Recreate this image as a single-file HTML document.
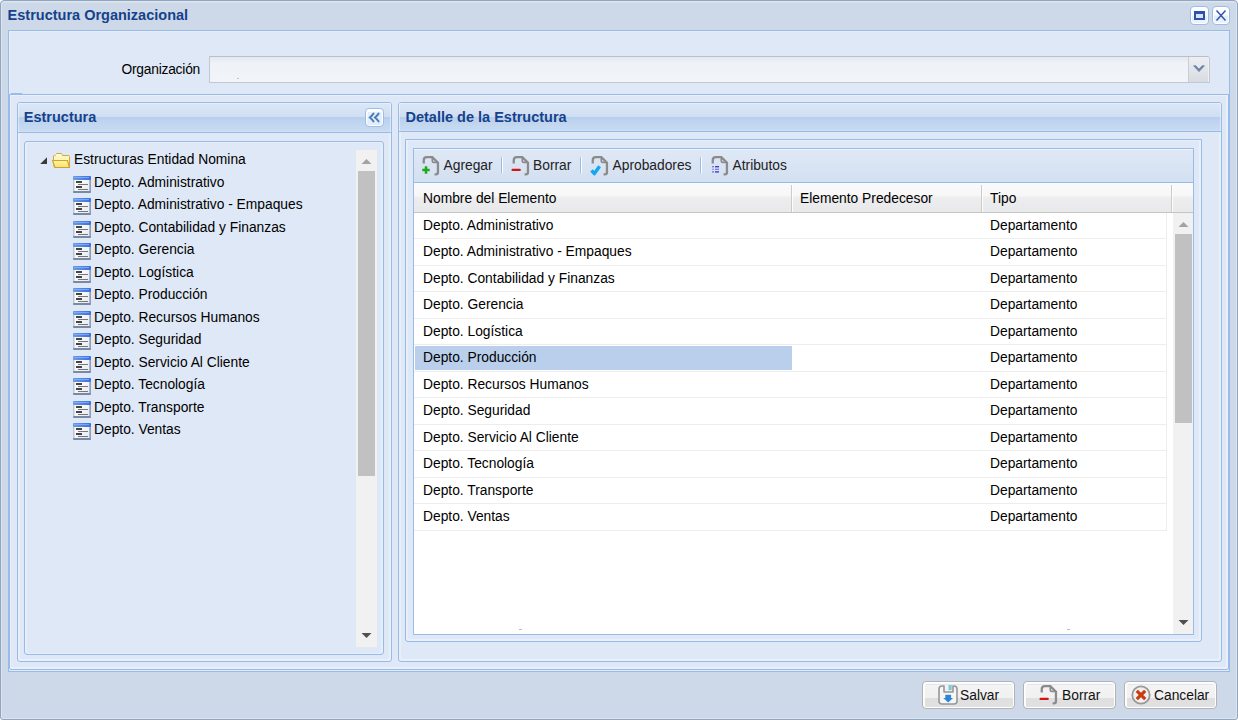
<!DOCTYPE html>
<html><head><meta charset="utf-8">
<style>
*{box-sizing:border-box}
html,body{margin:0;padding:0;width:1238px;height:720px;overflow:hidden;background:#fff;font-family:"Liberation Sans",sans-serif;}
.a{position:absolute}
.b{border:1px solid #99bbe8}
.t{position:absolute;white-space:nowrap;font-size:13.8px;color:#000;line-height:16px}
.ttl{position:absolute;white-space:nowrap;font-weight:bold;color:#15428b;font-size:14.5px;line-height:16px}
.tb{position:absolute;white-space:nowrap;font-size:13.8px;color:#222;line-height:16px}
.sep{position:absolute;width:2px;height:16px;border-left:1px solid #98bbe9;border-right:1px solid #fff}
</style></head><body>

<div class="a" style="left:0;top:0;width:1238px;height:720px;border:1px solid #8fa5c2;border-radius:4px 4px 3px 3px;box-shadow:inset 1px 1px 0 #dde5ef,inset -1px -1px 0 #dde5ef;background:#cdd9e8"></div>
<div class="a" style="left:2px;top:2px;width:1234px;height:1px;background:#d5dee9"></div>
<div class="ttl" style="left:7.6px;top:7px;">Estructura Organizacional</div>
<div class="a" style="left:1190px;top:6px;width:19px;height:19px;border:1px solid #9dbde8;border-radius:4px;background:linear-gradient(#fff 0,#fbfdff 45%,#e4eefb 55%,#eef4fc 100%);box-shadow:inset 0 0 0 1px #fff"></div>
<div class="a" style="left:1194px;top:11px;width:11px;height:9px;border:2px solid #3050ad;border-top-width:3px;background:#d4e4f9"></div>
<div class="a" style="left:1212px;top:6px;width:18px;height:19px;border:1px solid #9dbde8;border-radius:4px;background:linear-gradient(#fff 0,#fbfdff 45%,#e4eefb 55%,#eef4fc 100%);box-shadow:inset 0 0 0 1px #fff"></div>
<svg class="a" style="left:1215px;top:9px" width="12" height="13" viewBox="0 0 12 13"><path d="M1.5 1.5 L10.5 11.5 M10.5 1.5 L1.5 11.5" stroke="#3553b0" stroke-width="1.5" fill="none"/></svg>
<div class="a b" style="left:8px;top:30px;width:1222px;height:642px;background:#dfe8f6;box-shadow:inset 1px 1px 0 #e6eef9,inset 0 -1px 0 #e3ebf7"></div>
<div class="t" style="left:121.4px;top:62.2px;letter-spacing:-0.22px">Organización</div>
<div class="a" style="left:209px;top:56px;width:1001px;height:27px;border:1px solid #c2c7d1;border-top-color:#b8beca;border-radius:0 3px 0 0;background:linear-gradient(#e6eaf0 0,#e9edf3 3px,#eff3f8 6px,#f1f4f9 100%)"></div>
<div class="a" style="left:1188px;top:57px;width:21px;height:25px;border-left:1px solid #c9ced6;border-radius:0 2px 0 0;background:linear-gradient(#eceef2,#e4e7eb 40%,#d8dbe1);box-shadow:inset -1px 0 0 #eef0f3"></div>
<svg class="a" style="left:1193px;top:65px" width="12" height="8" viewBox="0 0 12 8"><path d="M0.6 0.8 L6 6.6 L11.4 0.8 L9.2 0.8 L6 4.2 L2.8 0.8 Z" fill="#6c82a9" stroke="#6c82a9" stroke-width="0.8" stroke-linejoin="round"/></svg>
<div class="a" style="left:237px;top:78px;width:2px;height:1px;background:#c0c4d0"></div>
<div class="a b" style="left:9px;top:94px;width:1220px;height:576px;background:#dfe8f6;border-radius:0 0 2px 2px;box-shadow:inset 1px 1px 0 #e9f0fa,inset -2px -2px 0 #e9f0fa"></div>
<div class="a" style="left:10px;top:93px;width:13px;height:2px;background:#99bbe8;border-radius:2px 2px 0 0"></div>
<div class="a b" style="left:17px;top:102px;width:375px;height:560px;border-radius:3px;background:#dfe8f6;box-shadow:inset 2px 1px 0 #e8eff9,inset -2px -2px 0 #e9f0fa"></div>
<div class="a" style="left:18px;top:103px;width:373px;height:30px;border-bottom:1px solid #99bbe8;border-radius:2px 2px 0 0;box-shadow:inset 1px 0 0 rgba(255,255,255,0.45),inset -1px 0 0 rgba(255,255,255,0.45);background:linear-gradient(to bottom,#e6eef9 0,#e6eef9 1px,#dce7f6 1px,#cfdef2 14px,#b6cdec 14px,#bed3ef 18px,#c9dbf2 28px,#d3e2f5 29px)"></div>
<div class="ttl" style="left:23.8px;top:109.4px;">Estructura</div>
<div class="a" style="left:365px;top:108px;width:19px;height:19px;border:1px solid #9dbde8;border-radius:4px;background:linear-gradient(#fff,#f3f8fe 40%,#dce9fa);box-shadow:inset 0 0 0 1px #fff"></div>
<svg class="a" style="left:360px;top:104px" width="30" height="26" viewBox="0 0 30 26"><rect x="8" y="8" width="13.5" height="12" fill="#e2eefc"/><path d="M13.5 9.6 Q11.6 12.2 9.9 13.5 Q11.6 14.8 13.5 17.4 M18.6 9.6 Q16.7 12.2 15 13.5 Q16.7 14.8 18.6 17.4" stroke="#4a7ab2" stroke-width="1.9" stroke-linecap="round" fill="none"/></svg>
<div class="a b" style="left:24px;top:141px;width:360px;height:514px;border-radius:3px;background:#dfe8f6;box-shadow:inset 2px 1px 0 #e6eef9,inset -2px -1px 0 #e6eef9"></div>
<div class="a" style="left:356px;top:150px;width:21px;height:497px;background:#f1f1f1"></div>
<div class="a" style="left:358px;top:171px;width:17px;height:305px;background:#c1c1c1"></div>
<svg class="a" style="left:361px;top:158px" width="11" height="7" viewBox="0 0 11 7"><path d="M0.5 6 L5.5 1 L10.5 6 Z" fill="#a3a3a3"/></svg>
<svg class="a" style="left:361px;top:632px" width="11" height="7" viewBox="0 0 11 7"><path d="M0.5 1 L5.5 6 L10.5 1 Z" fill="#505050"/></svg>
<svg class="a" style="left:40px;top:157px" width="8" height="8" viewBox="0 0 8 8"><path d="M7 0.2 L7 7 L0.2 7 Z" fill="#3a3a3a"/></svg>
<svg class="a" style="left:52px;top:152px" width="19" height="17" viewBox="0 0 19 17"><defs><linearGradient id="fg" x1="0" y1="0" x2="0" y2="1"><stop offset="0" stop-color="#fff79a"/><stop offset="1" stop-color="#fcdf78"/></linearGradient></defs><path d="M1.5 4 Q1.5 3.5 2.5 3.5 L3.5 3.5 L4.5 1.5 L9.5 1.5 L10.5 3.5 L16.5 3.5 Q17.5 3.5 17.5 4.5 L17.5 15.5 L2.5 15.5 L1.5 12 Z" fill="#fdf6b8" stroke="#d6a83c" stroke-width="1"/><path d="M3.5 3 L9.5 3" stroke="#fff" stroke-width="1.2"/><path d="M0.6 8.5 L15.5 8.5 L17.4 15.5 L3 15.5 Z" fill="url(#fg)" stroke="#d3a02e" stroke-width="1.1" stroke-linejoin="round"/></svg>
<div class="t" style="left:74px;top:152px">Estructuras Entidad Nomina</div>
<svg class="a" style="left:73px;top:176px" width="18" height="17" viewBox="0 0 18 17"><defs><linearGradient id="tb0" x1="0" y1="0" x2="1" y2="0"><stop offset="0" stop-color="#6b9ae8"/><stop offset="1" stop-color="#3a6fe0"/></linearGradient><linearGradient id="bd0" x1="0" y1="0" x2="1" y2="1"><stop offset="0" stop-color="#ffffff"/><stop offset="1" stop-color="#e6eaf2"/></linearGradient></defs><rect x="0" y="0" width="18" height="17" rx="1.5" fill="#bcc7d8"/><rect x="0" y="0" width="18" height="4" rx="1" fill="url(#tb0)"/><rect x="1" y="1" width="15" height="1" fill="#8db2f0" opacity="0.8"/><rect x="1.5" y="4" width="15" height="11" fill="url(#bd0)"/><rect x="0" y="15" width="18" height="2" rx="1" fill="#7889a5"/><rect x="16.4" y="4" width="1.6" height="11" fill="#909fb6"/><rect x="3" y="5" width="6" height="2" fill="#444"/><rect x="5" y="8" width="10" height="1" fill="#777"/><rect x="3" y="10" width="6" height="2" fill="#444"/><rect x="5" y="13" width="10" height="1" fill="#777"/></svg>
<div class="t" style="left:94px;top:175.0px">Depto. Administrativo</div>
<svg class="a" style="left:73px;top:198px" width="18" height="17" viewBox="0 0 18 17"><defs><linearGradient id="tb1" x1="0" y1="0" x2="1" y2="0"><stop offset="0" stop-color="#6b9ae8"/><stop offset="1" stop-color="#3a6fe0"/></linearGradient><linearGradient id="bd1" x1="0" y1="0" x2="1" y2="1"><stop offset="0" stop-color="#ffffff"/><stop offset="1" stop-color="#e6eaf2"/></linearGradient></defs><rect x="0" y="0" width="18" height="17" rx="1.5" fill="#bcc7d8"/><rect x="0" y="0" width="18" height="4" rx="1" fill="url(#tb1)"/><rect x="1" y="1" width="15" height="1" fill="#8db2f0" opacity="0.8"/><rect x="1.5" y="4" width="15" height="11" fill="url(#bd1)"/><rect x="0" y="15" width="18" height="2" rx="1" fill="#7889a5"/><rect x="16.4" y="4" width="1.6" height="11" fill="#909fb6"/><rect x="3" y="5" width="6" height="2" fill="#444"/><rect x="5" y="8" width="10" height="1" fill="#777"/><rect x="3" y="10" width="6" height="2" fill="#444"/><rect x="5" y="13" width="10" height="1" fill="#777"/></svg>
<div class="t" style="left:94px;top:197.0px">Depto. Administrativo - Empaques</div>
<svg class="a" style="left:73px;top:221px" width="18" height="17" viewBox="0 0 18 17"><defs><linearGradient id="tb2" x1="0" y1="0" x2="1" y2="0"><stop offset="0" stop-color="#6b9ae8"/><stop offset="1" stop-color="#3a6fe0"/></linearGradient><linearGradient id="bd2" x1="0" y1="0" x2="1" y2="1"><stop offset="0" stop-color="#ffffff"/><stop offset="1" stop-color="#e6eaf2"/></linearGradient></defs><rect x="0" y="0" width="18" height="17" rx="1.5" fill="#bcc7d8"/><rect x="0" y="0" width="18" height="4" rx="1" fill="url(#tb2)"/><rect x="1" y="1" width="15" height="1" fill="#8db2f0" opacity="0.8"/><rect x="1.5" y="4" width="15" height="11" fill="url(#bd2)"/><rect x="0" y="15" width="18" height="2" rx="1" fill="#7889a5"/><rect x="16.4" y="4" width="1.6" height="11" fill="#909fb6"/><rect x="3" y="5" width="6" height="2" fill="#444"/><rect x="5" y="8" width="10" height="1" fill="#777"/><rect x="3" y="10" width="6" height="2" fill="#444"/><rect x="5" y="13" width="10" height="1" fill="#777"/></svg>
<div class="t" style="left:94px;top:220.0px">Depto. Contabilidad y Finanzas</div>
<svg class="a" style="left:73px;top:243px" width="18" height="17" viewBox="0 0 18 17"><defs><linearGradient id="tb3" x1="0" y1="0" x2="1" y2="0"><stop offset="0" stop-color="#6b9ae8"/><stop offset="1" stop-color="#3a6fe0"/></linearGradient><linearGradient id="bd3" x1="0" y1="0" x2="1" y2="1"><stop offset="0" stop-color="#ffffff"/><stop offset="1" stop-color="#e6eaf2"/></linearGradient></defs><rect x="0" y="0" width="18" height="17" rx="1.5" fill="#bcc7d8"/><rect x="0" y="0" width="18" height="4" rx="1" fill="url(#tb3)"/><rect x="1" y="1" width="15" height="1" fill="#8db2f0" opacity="0.8"/><rect x="1.5" y="4" width="15" height="11" fill="url(#bd3)"/><rect x="0" y="15" width="18" height="2" rx="1" fill="#7889a5"/><rect x="16.4" y="4" width="1.6" height="11" fill="#909fb6"/><rect x="3" y="5" width="6" height="2" fill="#444"/><rect x="5" y="8" width="10" height="1" fill="#777"/><rect x="3" y="10" width="6" height="2" fill="#444"/><rect x="5" y="13" width="10" height="1" fill="#777"/></svg>
<div class="t" style="left:94px;top:242.0px">Depto. Gerencia</div>
<svg class="a" style="left:73px;top:266px" width="18" height="17" viewBox="0 0 18 17"><defs><linearGradient id="tb4" x1="0" y1="0" x2="1" y2="0"><stop offset="0" stop-color="#6b9ae8"/><stop offset="1" stop-color="#3a6fe0"/></linearGradient><linearGradient id="bd4" x1="0" y1="0" x2="1" y2="1"><stop offset="0" stop-color="#ffffff"/><stop offset="1" stop-color="#e6eaf2"/></linearGradient></defs><rect x="0" y="0" width="18" height="17" rx="1.5" fill="#bcc7d8"/><rect x="0" y="0" width="18" height="4" rx="1" fill="url(#tb4)"/><rect x="1" y="1" width="15" height="1" fill="#8db2f0" opacity="0.8"/><rect x="1.5" y="4" width="15" height="11" fill="url(#bd4)"/><rect x="0" y="15" width="18" height="2" rx="1" fill="#7889a5"/><rect x="16.4" y="4" width="1.6" height="11" fill="#909fb6"/><rect x="3" y="5" width="6" height="2" fill="#444"/><rect x="5" y="8" width="10" height="1" fill="#777"/><rect x="3" y="10" width="6" height="2" fill="#444"/><rect x="5" y="13" width="10" height="1" fill="#777"/></svg>
<div class="t" style="left:94px;top:265.0px">Depto. Logística</div>
<svg class="a" style="left:73px;top:288px" width="18" height="17" viewBox="0 0 18 17"><defs><linearGradient id="tb5" x1="0" y1="0" x2="1" y2="0"><stop offset="0" stop-color="#6b9ae8"/><stop offset="1" stop-color="#3a6fe0"/></linearGradient><linearGradient id="bd5" x1="0" y1="0" x2="1" y2="1"><stop offset="0" stop-color="#ffffff"/><stop offset="1" stop-color="#e6eaf2"/></linearGradient></defs><rect x="0" y="0" width="18" height="17" rx="1.5" fill="#bcc7d8"/><rect x="0" y="0" width="18" height="4" rx="1" fill="url(#tb5)"/><rect x="1" y="1" width="15" height="1" fill="#8db2f0" opacity="0.8"/><rect x="1.5" y="4" width="15" height="11" fill="url(#bd5)"/><rect x="0" y="15" width="18" height="2" rx="1" fill="#7889a5"/><rect x="16.4" y="4" width="1.6" height="11" fill="#909fb6"/><rect x="3" y="5" width="6" height="2" fill="#444"/><rect x="5" y="8" width="10" height="1" fill="#777"/><rect x="3" y="10" width="6" height="2" fill="#444"/><rect x="5" y="13" width="10" height="1" fill="#777"/></svg>
<div class="t" style="left:94px;top:287.0px">Depto. Producción</div>
<svg class="a" style="left:73px;top:311px" width="18" height="17" viewBox="0 0 18 17"><defs><linearGradient id="tb6" x1="0" y1="0" x2="1" y2="0"><stop offset="0" stop-color="#6b9ae8"/><stop offset="1" stop-color="#3a6fe0"/></linearGradient><linearGradient id="bd6" x1="0" y1="0" x2="1" y2="1"><stop offset="0" stop-color="#ffffff"/><stop offset="1" stop-color="#e6eaf2"/></linearGradient></defs><rect x="0" y="0" width="18" height="17" rx="1.5" fill="#bcc7d8"/><rect x="0" y="0" width="18" height="4" rx="1" fill="url(#tb6)"/><rect x="1" y="1" width="15" height="1" fill="#8db2f0" opacity="0.8"/><rect x="1.5" y="4" width="15" height="11" fill="url(#bd6)"/><rect x="0" y="15" width="18" height="2" rx="1" fill="#7889a5"/><rect x="16.4" y="4" width="1.6" height="11" fill="#909fb6"/><rect x="3" y="5" width="6" height="2" fill="#444"/><rect x="5" y="8" width="10" height="1" fill="#777"/><rect x="3" y="10" width="6" height="2" fill="#444"/><rect x="5" y="13" width="10" height="1" fill="#777"/></svg>
<div class="t" style="left:94px;top:310.0px">Depto. Recursos Humanos</div>
<svg class="a" style="left:73px;top:333px" width="18" height="17" viewBox="0 0 18 17"><defs><linearGradient id="tb7" x1="0" y1="0" x2="1" y2="0"><stop offset="0" stop-color="#6b9ae8"/><stop offset="1" stop-color="#3a6fe0"/></linearGradient><linearGradient id="bd7" x1="0" y1="0" x2="1" y2="1"><stop offset="0" stop-color="#ffffff"/><stop offset="1" stop-color="#e6eaf2"/></linearGradient></defs><rect x="0" y="0" width="18" height="17" rx="1.5" fill="#bcc7d8"/><rect x="0" y="0" width="18" height="4" rx="1" fill="url(#tb7)"/><rect x="1" y="1" width="15" height="1" fill="#8db2f0" opacity="0.8"/><rect x="1.5" y="4" width="15" height="11" fill="url(#bd7)"/><rect x="0" y="15" width="18" height="2" rx="1" fill="#7889a5"/><rect x="16.4" y="4" width="1.6" height="11" fill="#909fb6"/><rect x="3" y="5" width="6" height="2" fill="#444"/><rect x="5" y="8" width="10" height="1" fill="#777"/><rect x="3" y="10" width="6" height="2" fill="#444"/><rect x="5" y="13" width="10" height="1" fill="#777"/></svg>
<div class="t" style="left:94px;top:332.0px">Depto. Seguridad</div>
<svg class="a" style="left:73px;top:356px" width="18" height="17" viewBox="0 0 18 17"><defs><linearGradient id="tb8" x1="0" y1="0" x2="1" y2="0"><stop offset="0" stop-color="#6b9ae8"/><stop offset="1" stop-color="#3a6fe0"/></linearGradient><linearGradient id="bd8" x1="0" y1="0" x2="1" y2="1"><stop offset="0" stop-color="#ffffff"/><stop offset="1" stop-color="#e6eaf2"/></linearGradient></defs><rect x="0" y="0" width="18" height="17" rx="1.5" fill="#bcc7d8"/><rect x="0" y="0" width="18" height="4" rx="1" fill="url(#tb8)"/><rect x="1" y="1" width="15" height="1" fill="#8db2f0" opacity="0.8"/><rect x="1.5" y="4" width="15" height="11" fill="url(#bd8)"/><rect x="0" y="15" width="18" height="2" rx="1" fill="#7889a5"/><rect x="16.4" y="4" width="1.6" height="11" fill="#909fb6"/><rect x="3" y="5" width="6" height="2" fill="#444"/><rect x="5" y="8" width="10" height="1" fill="#777"/><rect x="3" y="10" width="6" height="2" fill="#444"/><rect x="5" y="13" width="10" height="1" fill="#777"/></svg>
<div class="t" style="left:94px;top:355.0px">Depto. Servicio Al Cliente</div>
<svg class="a" style="left:73px;top:378px" width="18" height="17" viewBox="0 0 18 17"><defs><linearGradient id="tb9" x1="0" y1="0" x2="1" y2="0"><stop offset="0" stop-color="#6b9ae8"/><stop offset="1" stop-color="#3a6fe0"/></linearGradient><linearGradient id="bd9" x1="0" y1="0" x2="1" y2="1"><stop offset="0" stop-color="#ffffff"/><stop offset="1" stop-color="#e6eaf2"/></linearGradient></defs><rect x="0" y="0" width="18" height="17" rx="1.5" fill="#bcc7d8"/><rect x="0" y="0" width="18" height="4" rx="1" fill="url(#tb9)"/><rect x="1" y="1" width="15" height="1" fill="#8db2f0" opacity="0.8"/><rect x="1.5" y="4" width="15" height="11" fill="url(#bd9)"/><rect x="0" y="15" width="18" height="2" rx="1" fill="#7889a5"/><rect x="16.4" y="4" width="1.6" height="11" fill="#909fb6"/><rect x="3" y="5" width="6" height="2" fill="#444"/><rect x="5" y="8" width="10" height="1" fill="#777"/><rect x="3" y="10" width="6" height="2" fill="#444"/><rect x="5" y="13" width="10" height="1" fill="#777"/></svg>
<div class="t" style="left:94px;top:377.0px">Depto. Tecnología</div>
<svg class="a" style="left:73px;top:401px" width="18" height="17" viewBox="0 0 18 17"><defs><linearGradient id="tb10" x1="0" y1="0" x2="1" y2="0"><stop offset="0" stop-color="#6b9ae8"/><stop offset="1" stop-color="#3a6fe0"/></linearGradient><linearGradient id="bd10" x1="0" y1="0" x2="1" y2="1"><stop offset="0" stop-color="#ffffff"/><stop offset="1" stop-color="#e6eaf2"/></linearGradient></defs><rect x="0" y="0" width="18" height="17" rx="1.5" fill="#bcc7d8"/><rect x="0" y="0" width="18" height="4" rx="1" fill="url(#tb10)"/><rect x="1" y="1" width="15" height="1" fill="#8db2f0" opacity="0.8"/><rect x="1.5" y="4" width="15" height="11" fill="url(#bd10)"/><rect x="0" y="15" width="18" height="2" rx="1" fill="#7889a5"/><rect x="16.4" y="4" width="1.6" height="11" fill="#909fb6"/><rect x="3" y="5" width="6" height="2" fill="#444"/><rect x="5" y="8" width="10" height="1" fill="#777"/><rect x="3" y="10" width="6" height="2" fill="#444"/><rect x="5" y="13" width="10" height="1" fill="#777"/></svg>
<div class="t" style="left:94px;top:400.0px">Depto. Transporte</div>
<svg class="a" style="left:73px;top:423px" width="18" height="17" viewBox="0 0 18 17"><defs><linearGradient id="tb11" x1="0" y1="0" x2="1" y2="0"><stop offset="0" stop-color="#6b9ae8"/><stop offset="1" stop-color="#3a6fe0"/></linearGradient><linearGradient id="bd11" x1="0" y1="0" x2="1" y2="1"><stop offset="0" stop-color="#ffffff"/><stop offset="1" stop-color="#e6eaf2"/></linearGradient></defs><rect x="0" y="0" width="18" height="17" rx="1.5" fill="#bcc7d8"/><rect x="0" y="0" width="18" height="4" rx="1" fill="url(#tb11)"/><rect x="1" y="1" width="15" height="1" fill="#8db2f0" opacity="0.8"/><rect x="1.5" y="4" width="15" height="11" fill="url(#bd11)"/><rect x="0" y="15" width="18" height="2" rx="1" fill="#7889a5"/><rect x="16.4" y="4" width="1.6" height="11" fill="#909fb6"/><rect x="3" y="5" width="6" height="2" fill="#444"/><rect x="5" y="8" width="10" height="1" fill="#777"/><rect x="3" y="10" width="6" height="2" fill="#444"/><rect x="5" y="13" width="10" height="1" fill="#777"/></svg>
<div class="t" style="left:94px;top:422.0px">Depto. Ventas</div>
<div class="a b" style="left:398px;top:102px;width:824px;height:560px;border-radius:3px;background:#dfe8f6;box-shadow:inset 2px 1px 0 #e8eff9,inset -2px -2px 0 #e9f0fa"></div>
<div class="a" style="left:399px;top:103px;width:822px;height:29px;border-bottom:1px solid #99bbe8;border-radius:2px 2px 0 0;box-shadow:inset 1px 0 0 rgba(255,255,255,0.45),inset -1px 0 0 rgba(255,255,255,0.45);background:linear-gradient(to bottom,#e6eef9 0,#e6eef9 1px,#dce7f6 1px,#cfdef2 14px,#b6cdec 14px,#bed3ef 18px,#c9dbf2 27px,#d3e2f5 28px)"></div>
<div class="ttl" style="left:405.5px;top:109.4px;">Detalle de la Estructura</div>
<div class="a b" style="left:405px;top:139px;width:797px;height:503px;border-radius:0 0 3px 3px;background:#dfe8f6;box-shadow:inset 2px 1px 0 #e8eff9,inset -2px -2px 0 #e9f0fa"></div>
<div class="a b" style="left:413px;top:148px;width:781px;height:487px;background:#fff"></div>
<div class="a" style="left:414px;top:149px;width:779px;height:34px;border-top:1px solid #f0f5fb;border-bottom:1px solid #99bbe8;background:linear-gradient(#dfe8f5,#d3e0f1)"></div>
<svg class="a" style="left:416px;top:150px" width="30" height="30" viewBox="0 0 30 30"><path d="M7.75 13.4 L7.75 10.3 Q7.75 7.15 10.9 7.15 L16.3 7.15 L21.95 12.8 L21.95 22.2 Q21.95 24.3 19.85 24.3 L18.6 24.3" fill="none" stroke="#8b8b8b" stroke-width="2.3"/><path d="M16.3 7.4 L16.3 10.9 Q16.3 12.3 17.7 12.3 L21.7 12.3" fill="none" stroke="#8b8b8b" stroke-width="1.7"/><path d="M10 16.3 L10 23.7 M6.3 20 L13.7 20" stroke="#1ea81e" stroke-width="2.5"/></svg>
<div class="tb" style="left:443.5px;top:158px">Agregar</div>
<div class="sep" style="left:501px;top:157px"></div>
<svg class="a" style="left:506px;top:150px" width="30" height="30" viewBox="0 0 30 30"><path d="M7.75 13.4 L7.75 10.3 Q7.75 7.15 10.9 7.15 L16.3 7.15 L21.95 12.8 L21.95 22.2 Q21.95 24.3 19.85 24.3 L18.6 24.3" fill="none" stroke="#8b8b8b" stroke-width="2.3"/><path d="M16.3 7.4 L16.3 10.9 Q16.3 12.3 17.7 12.3 L21.7 12.3" fill="none" stroke="#8b8b8b" stroke-width="1.7"/><path d="M6.6 19.9 L13.7 19.9" stroke="#d41414" stroke-width="2.3" stroke-linecap="round"/></svg>
<div class="tb" style="left:533px;top:158px">Borrar</div>
<div class="sep" style="left:580px;top:157px"></div>
<svg class="a" style="left:585px;top:150px" width="30" height="30" viewBox="0 0 30 30"><path d="M7.75 13.4 L7.75 10.3 Q7.75 7.15 10.9 7.15 L16.3 7.15 L21.95 12.8 L21.95 22.2 Q21.95 24.3 19.85 24.3 L18.6 24.3" fill="none" stroke="#8b8b8b" stroke-width="2.3"/><path d="M16.3 7.4 L16.3 10.9 Q16.3 12.3 17.7 12.3 L21.7 12.3" fill="none" stroke="#8b8b8b" stroke-width="1.7"/><path d="M6.5 20.3 L9.4 23.6 L14.6 16.2" fill="none" stroke="#14a6f2" stroke-width="3.4" stroke-linejoin="round"/></svg>
<div class="tb" style="left:612.5px;top:158px">Aprobadores</div>
<div class="sep" style="left:700px;top:157px"></div>
<svg class="a" style="left:705px;top:150px" width="30" height="30" viewBox="0 0 30 30"><path d="M7.75 13.4 L7.75 10.3 Q7.75 7.15 10.9 7.15 L16.3 7.15 L21.95 12.8 L21.95 22.2 Q21.95 24.3 19.85 24.3 L18.6 24.3" fill="none" stroke="#8b8b8b" stroke-width="2.3"/><path d="M16.3 7.4 L16.3 10.9 Q16.3 12.3 17.7 12.3 L21.7 12.3" fill="none" stroke="#8b8b8b" stroke-width="1.7"/><rect x="7" y="16" width="2" height="1.4" fill="#7a7ae6"/><rect x="7" y="18.6" width="2" height="1.4" fill="#a0a0ea"/><rect x="7" y="21.2" width="2" height="1.4" fill="#7a7ae6"/><rect x="10" y="16" width="4" height="1.4" fill="#3d3dd8"/><rect x="10" y="18.6" width="4" height="1.4" fill="#8282e2"/><rect x="10" y="21.2" width="4" height="1.4" fill="#3d3dd8"/></svg>
<div class="tb" style="left:732.5px;top:158px">Atributos</div>
<div class="a" style="left:414px;top:183px;width:779px;height:30px;border-bottom:1px solid #c5c5c5;background:linear-gradient(#fafafa,#f7f7f7 42%,#ededee 52%,#e8e9eb)"></div>
<div class="a" style="left:791px;top:185px;width:2px;height:27px;border-left:1px solid #cbcbcb;border-right:1px solid #fdfdfd"></div>
<div class="a" style="left:981px;top:185px;width:2px;height:27px;border-left:1px solid #cbcbcb;border-right:1px solid #fdfdfd"></div>
<div class="a" style="left:1171px;top:185px;width:2px;height:27px;border-left:1px solid #cbcbcb;border-right:1px solid #fdfdfd"></div>
<div class="t" style="left:423px;top:190.5px">Nombre del Elemento</div>
<div class="t" style="left:800px;top:190.5px">Elemento Predecesor</div>
<div class="t" style="left:990px;top:190.5px">Tipo</div>
<div class="a" style="left:414px;top:238px;width:753px;height:1px;background:#ededed"></div>
<div class="t" style="left:423px;top:217.75px">Depto. Administrativo</div>
<div class="t" style="left:990px;top:217.75px">Departamento</div>
<div class="a" style="left:414px;top:265px;width:753px;height:1px;background:#ededed"></div>
<div class="t" style="left:423px;top:244.25px">Depto. Administrativo - Empaques</div>
<div class="t" style="left:990px;top:244.25px">Departamento</div>
<div class="a" style="left:414px;top:291px;width:753px;height:1px;background:#ededed"></div>
<div class="t" style="left:423px;top:270.75px">Depto. Contabilidad y Finanzas</div>
<div class="t" style="left:990px;top:270.75px">Departamento</div>
<div class="a" style="left:414px;top:318px;width:753px;height:1px;background:#ededed"></div>
<div class="t" style="left:423px;top:297.25px">Depto. Gerencia</div>
<div class="t" style="left:990px;top:297.25px">Departamento</div>
<div class="a" style="left:414px;top:344px;width:753px;height:1px;background:#ededed"></div>
<div class="t" style="left:423px;top:323.75px">Depto. Logística</div>
<div class="t" style="left:990px;top:323.75px">Departamento</div>
<div class="a" style="left:414px;top:371px;width:753px;height:1px;background:#ededed"></div>
<div class="a" style="left:415px;top:346px;width:377px;height:24px;background:#b9cfec"></div>
<div class="t" style="left:423px;top:350.25px">Depto. Producción</div>
<div class="t" style="left:990px;top:350.25px">Departamento</div>
<div class="a" style="left:414px;top:397px;width:753px;height:1px;background:#ededed"></div>
<div class="t" style="left:423px;top:376.75px">Depto. Recursos Humanos</div>
<div class="t" style="left:990px;top:376.75px">Departamento</div>
<div class="a" style="left:414px;top:424px;width:753px;height:1px;background:#ededed"></div>
<div class="t" style="left:423px;top:403.25px">Depto. Seguridad</div>
<div class="t" style="left:990px;top:403.25px">Departamento</div>
<div class="a" style="left:414px;top:450px;width:753px;height:1px;background:#ededed"></div>
<div class="t" style="left:423px;top:429.75px">Depto. Servicio Al Cliente</div>
<div class="t" style="left:990px;top:429.75px">Departamento</div>
<div class="a" style="left:414px;top:477px;width:753px;height:1px;background:#ededed"></div>
<div class="t" style="left:423px;top:456.25px">Depto. Tecnología</div>
<div class="t" style="left:990px;top:456.25px">Departamento</div>
<div class="a" style="left:414px;top:503px;width:753px;height:1px;background:#ededed"></div>
<div class="t" style="left:423px;top:482.75px">Depto. Transporte</div>
<div class="t" style="left:990px;top:482.75px">Departamento</div>
<div class="a" style="left:414px;top:530px;width:753px;height:1px;background:#ededed"></div>
<div class="t" style="left:423px;top:509.25px">Depto. Ventas</div>
<div class="t" style="left:990px;top:509.25px">Departamento</div>
<div class="a" style="left:1166px;top:213px;width:1px;height:318px;background:#ededed"></div>
<div class="a" style="left:519px;top:629px;width:3px;height:1px;background:#b8b8c8"></div>
<div class="a" style="left:1067px;top:629px;width:3px;height:1px;background:#b8b8c8"></div>
<div class="a" style="left:1173px;top:213px;width:20px;height:421px;background:#f1f1f1"></div>
<div class="a" style="left:1175px;top:234px;width:17px;height:189px;background:#c1c1c1"></div>
<svg class="a" style="left:1178px;top:221px" width="11" height="7" viewBox="0 0 11 7"><path d="M0.5 6 L5.5 1 L10.5 6 Z" fill="#a3a3a3"/></svg>
<svg class="a" style="left:1178px;top:619px" width="11" height="7" viewBox="0 0 11 7"><path d="M0.5 1 L5.5 6 L10.5 1 Z" fill="#505050"/></svg>
<div class="a" style="left:922px;top:681px;width:93px;height:28px;border:1px solid #b3b3b3;border-radius:4px;box-shadow:inset 0 0 0 1px #fff,inset 1px 1px 0 1px #fbfbfb;background:linear-gradient(#f4f4f4,#f1f1f1 60%,#dfdfdf 61%,#e1e1e1)"></div><div class="a" style="left:926px;top:684px;width:85px;height:1px;background:#dfe8f4"></div><svg class="a" style="left:937px;top:684px" width="22" height="22" viewBox="0 0 22 22"><path d="M5 2 L7 2 L7 8 L16 8 L16 2 L17 2 Q20 2 20 5 L20 17 Q20 20 17 20 L5 20 Q2 20 2 17 L2 5 Q2 2 5 2 Z" fill="#f6f6f6" stroke="#979797" stroke-width="1.6" stroke-linejoin="round"/><rect x="11.5" y="1" width="3.2" height="5.2" fill="#80c8d8"/><rect x="8.3" y="10.8" width="5.8" height="3.4" fill="#2f86d6"/><path d="M6.3 14 L16.1 14 L11.2 18.5 Z" fill="#2f86d6"/></svg><div class="tb" style="left:960.0px;top:687.8px;color:#111">Salvar</div>
<div class="a" style="left:1023px;top:681px;width:93px;height:28px;border:1px solid #b3b3b3;border-radius:4px;box-shadow:inset 0 0 0 1px #fff,inset 1px 1px 0 1px #fbfbfb;background:linear-gradient(#f4f4f4,#f1f1f1 60%,#dfdfdf 61%,#e1e1e1)"></div><div class="a" style="left:1027px;top:684px;width:85px;height:1px;background:#dfe8f4"></div><svg class="a" style="left:1034px;top:679px" width="30" height="30" viewBox="0 0 30 30"><path d="M7.75 13.4 L7.75 10.3 Q7.75 7.15 10.9 7.15 L16.3 7.15 L21.95 12.8 L21.95 22.2 Q21.95 24.3 19.85 24.3 L18.6 24.3" fill="none" stroke="#8b8b8b" stroke-width="2.3"/><path d="M16.3 7.4 L16.3 10.9 Q16.3 12.3 17.7 12.3 L21.7 12.3" fill="none" stroke="#8b8b8b" stroke-width="1.7"/><path d="M6.6 19.9 L13.7 19.9" stroke="#d41414" stroke-width="2.3" stroke-linecap="round"/></svg><div class="tb" style="left:1062.0px;top:687.8px;color:#111">Borrar</div>
<div class="a" style="left:1124px;top:681px;width:93px;height:28px;border:1px solid #b3b3b3;border-radius:4px;box-shadow:inset 0 0 0 1px #fff,inset 1px 1px 0 1px #fbfbfb;background:linear-gradient(#f4f4f4,#f1f1f1 60%,#dfdfdf 61%,#e1e1e1)"></div><div class="a" style="left:1128px;top:684px;width:85px;height:1px;background:#dfe8f4"></div><svg class="a" style="left:1131px;top:685px" width="20" height="20" viewBox="0 0 20 20"><circle cx="10" cy="10" r="8.7" fill="#f0f0f0" stroke="#989898" stroke-width="1.8"/><path d="M5.8 5.8 L14.2 14.2 M14.2 5.8 L5.8 14.2" stroke="#cc3a10" stroke-width="3.2"/></svg><div class="tb" style="left:1154.0px;top:687.8px;color:#111">Cancelar</div>
</body></html>
